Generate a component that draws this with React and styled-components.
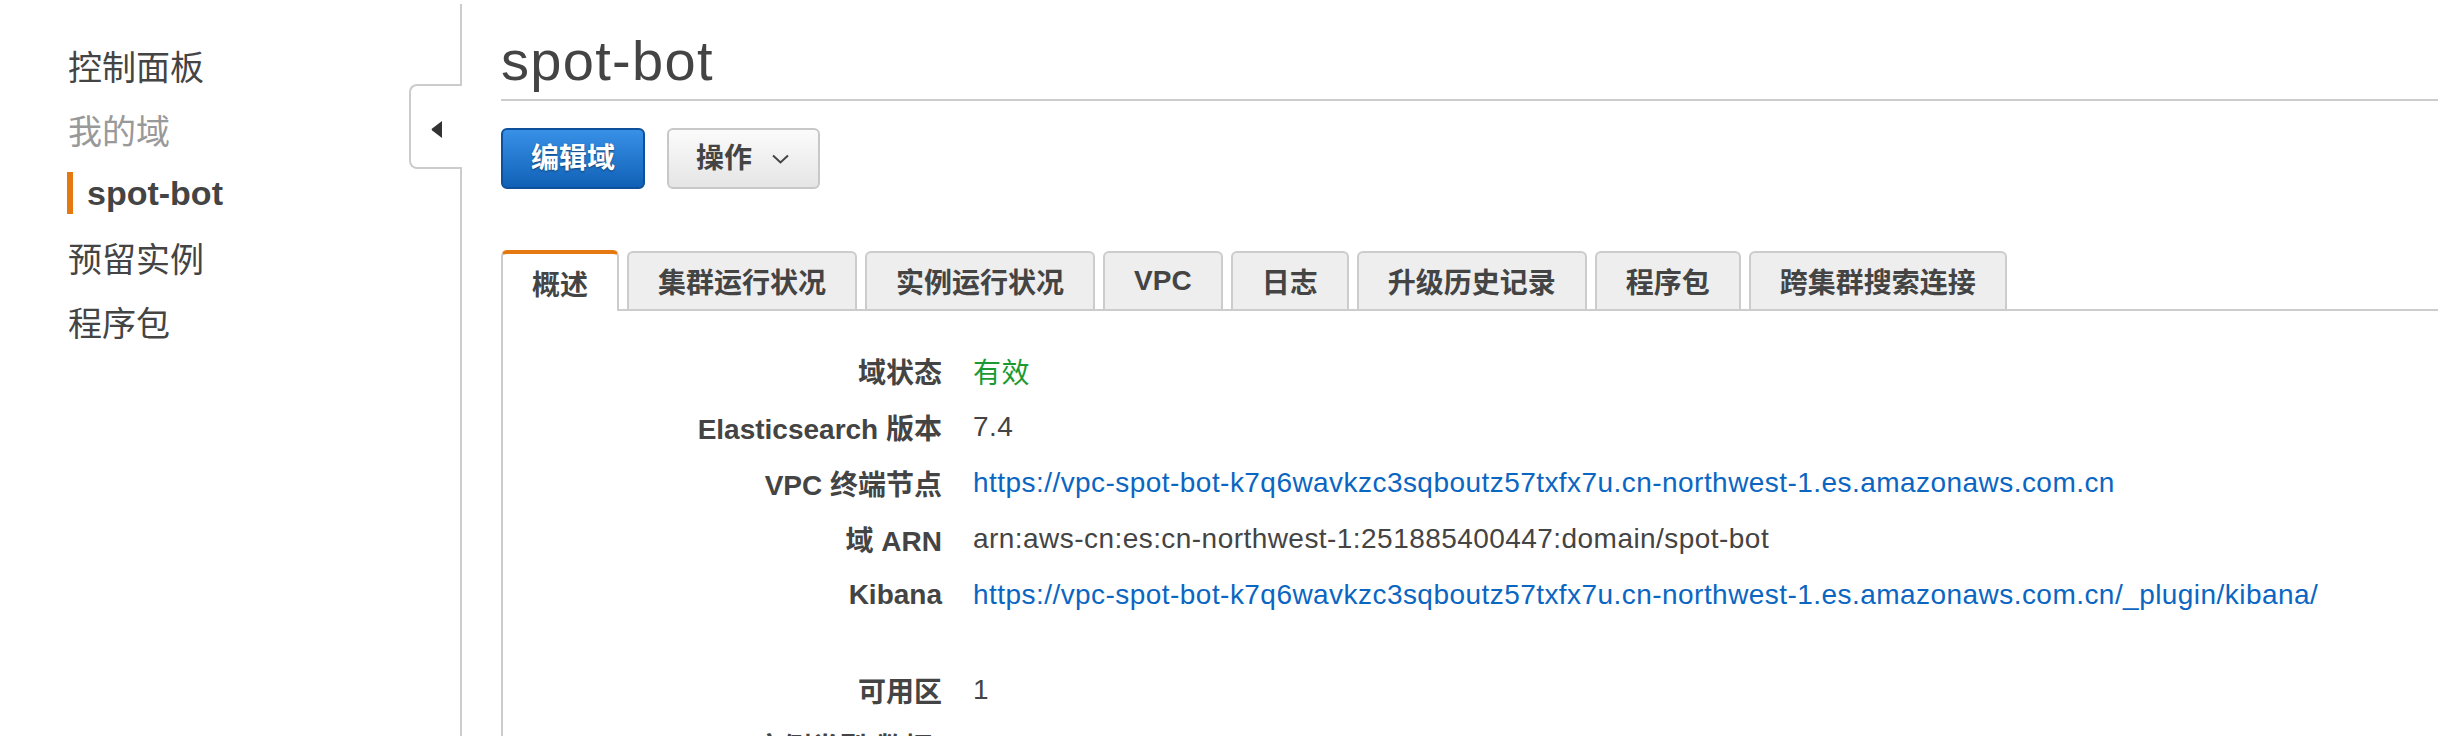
import React from 'react'
import styled, { createGlobalStyle, css } from 'styled-components'

const GlobalStyle = createGlobalStyle`
  html, body {
    margin: 0;
    padding: 0;
    background: #fff;
  }
  body {
    font-family: "Liberation Sans", "Noto Sans CJK SC", Arial, sans-serif;
    color: #444;
  }
`

const Page = styled.div`
  display: flex;
  height: 100vh;
  overflow: hidden;
`

const Sidebar = styled.nav`
  position: relative;
  flex: 0 0 462px;
  box-sizing: border-box;
  margin-top: 4px;
  border-right: 2px solid #ccc;
`

const NavList = styled.ul`
  list-style: none;
  margin: 0;
  padding: 29px 0 0 68px;
`

const NavItem = styled.li`
  display: flex;
  align-items: center;
  height: 64px;
  font-size: 34px;
  color: ${p => (p.$muted ? '#999' : '#444')};
  font-weight: ${p => (p.$active ? 700 : 400)};
`

const ActiveMark = styled.span`
  display: block;
  margin-left: -1px;
  padding-left: 14px;
  border-left: 6px solid #e47911;
  line-height: 42px;
`

const Toggle = styled.button`
  position: absolute;
  top: 80px;
  right: -2px;
  width: 53px;
  height: 85px;
  box-sizing: border-box;
  padding: 0;
  display: flex;
  align-items: center;
  justify-content: center;
  background: #fff;
  border: 2px solid #ccc;
  border-right: none;
  border-radius: 8px 0 0 8px;

  svg {
    margin-top: 6px;
  }
`

const Main = styled.main`
  flex: 1;
  min-width: 0;
  padding-left: 39px;
`

const Title = styled.h1`
  margin: 0;
  padding: 33px 0 10px;
  font-size: 56px;
  line-height: 56px;
  font-weight: 400;
  letter-spacing: 1.3px;
  color: #444;
  border-bottom: 2px solid #ccc;
`

const Toolbar = styled.div`
  display: flex;
  gap: 22px;
  margin-top: 27px;
`

const Button = styled.button`
  display: inline-flex;
  align-items: center;
  box-sizing: border-box;
  height: 61px;
  font-family: inherit;
  font-size: 28px;
  font-weight: 700;
  line-height: 1;
  border-radius: 6px;
  cursor: pointer;

  ${p =>
    p.$primary
      ? css`
          padding: 0 28px;
          color: #fff;
          border: 2px solid #0d519c;
          background: linear-gradient(#3891e7, #1061b6);
          text-shadow: 0 1px 2px rgba(0, 0, 0, 0.45);
        `
      : css`
          gap: 20px;
          padding: 0 29px 0 27px;
          color: #444;
          border: 2px solid #c8c8c8;
          background: linear-gradient(#fbfbfb, #e5e5e5);
        `}
`

const TabBar = styled.div`
  display: flex;
  align-items: flex-end;
  gap: 8px;
  height: 59px;
  margin-top: 61px;
  border-bottom: 2px solid #ccc;
`

const Tab = styled.div`
  box-sizing: border-box;
  display: flex;
  align-items: center;
  padding: 0 29px;
  font-size: 28px;
  font-weight: 700;
  color: #444;
  white-space: nowrap;
  border: 2px solid #ccc;
  border-bottom: none;
  border-radius: 6px 6px 0 0;

  ${p =>
    p.$active
      ? css`
          position: relative;
          height: 61px;
          margin-bottom: -2px;
          background: #fff;
          border-top: 4px solid #e47911;
        `
      : css`
          height: 58px;
          background: #eee;
        `}
`

const Panel = styled.section`
  border-left: 2px solid #ccc;
  padding-top: 32px;
`

const DetailRow = styled.div`
  display: grid;
  grid-template-columns: 439px 1fr;
  column-gap: 31px;
  align-items: center;
  height: 56px;
  margin-top: ${p => (p.$spaced ? '39px' : '0')};
  font-size: 28px;
`

const Label = styled.div`
  text-align: right;
  font-weight: 700;
  color: #444;
  white-space: nowrap;
`

const Value = styled.div`
  color: ${p => (p.$ok ? '#1b9a34' : '#444')};
  letter-spacing: 0.45px;
  white-space: nowrap;
`

const Link = styled.a`
  color: #0b66c2;
  text-decoration: none;
`

const navItems = [
  { label: '控制面板' },
  { label: '我的域', muted: true },
  { label: 'spot-bot', active: true },
  { label: '预留实例' },
  { label: '程序包' },
]

const tabs = ['概述', '集群运行状况', '实例运行状况', 'VPC', '日志', '升级历史记录', '程序包', '跨集群搜索连接']

const endpoint = 'https://vpc-spot-bot-k7q6wavkzc3sqboutz57txfx7u.cn-northwest-1.es.amazonaws.com.cn'

const LeftArrow = () => (
  <svg width="11" height="17" viewBox="0 0 11 17">
    <path d="M11 0 L11 17 L1.2 9.6 Q0 8.5 1.2 7.4 Z" fill="#333" />
  </svg>
)

const Chevron = () => (
  <svg width="17" height="10" viewBox="0 0 17 10">
    <polyline points="1,1.5 8.5,8.5 16,1.5" fill="none" stroke="#444" strokeWidth="2" />
  </svg>
)

const App = () => {
  return (
    <Page>
      <GlobalStyle />
      <Sidebar>
        <NavList>
          {navItems.map(item => (
            <NavItem key={item.label} $muted={item.muted} $active={item.active}>
              {item.active ? <ActiveMark>{item.label}</ActiveMark> : item.label}
            </NavItem>
          ))}
        </NavList>
        <Toggle aria-label="收起">
          <LeftArrow />
        </Toggle>
      </Sidebar>

      <Main>
        <Title>spot-bot</Title>
        <Toolbar>
          <Button $primary>编辑域</Button>
          <Button>
            操作
            <Chevron />
          </Button>
        </Toolbar>

        <TabBar>
          {tabs.map((t, i) => (
            <Tab key={t} $active={i === 0}>{t}</Tab>
          ))}
        </TabBar>

        <Panel>
          <DetailRow>
            <Label>域状态</Label>
            <Value $ok>有效</Value>
          </DetailRow>
          <DetailRow>
            <Label>Elasticsearch 版本</Label>
            <Value>7.4</Value>
          </DetailRow>
          <DetailRow>
            <Label>VPC 终端节点</Label>
            <Value><Link href="#">{endpoint}</Link></Value>
          </DetailRow>
          <DetailRow>
            <Label>域 ARN</Label>
            <Value>arn:aws-cn:es:cn-northwest-1:251885400447:domain/spot-bot</Value>
          </DetailRow>
          <DetailRow>
            <Label>Kibana</Label>
            <Value><Link href="#">{endpoint}/_plugin/kibana/</Link></Value>
          </DetailRow>
          <DetailRow $spaced>
            <Label>可用区</Label>
            <Value>1</Value>
          </DetailRow>
          <DetailRow>
            <Label>实例类型(数据)</Label>
            <Value />
          </DetailRow>
        </Panel>
      </Main>
    </Page>
  )
}

export default App
